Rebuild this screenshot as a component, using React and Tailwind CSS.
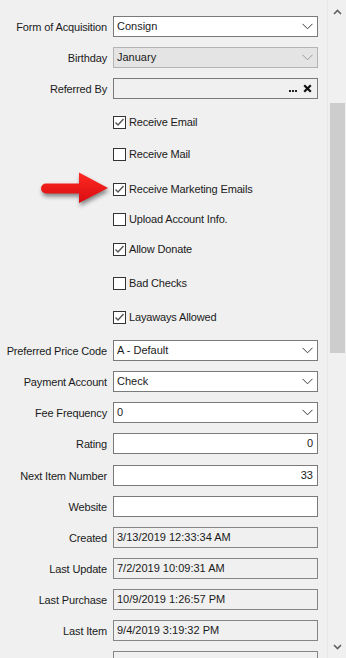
import React from "react";

const font = { fontFamily: '"Liberation Sans", Arial, sans-serif' };

function Chevron({ light }) {
  return (
    <svg width="11" height="7" viewBox="0 0 11 7" className="shrink-0">
      <polyline points="0.5,0.8 5.5,5.8 10.5,0.8" fill="none" stroke={light ? "#9a9a9a" : "#3c3c3c"} strokeWidth="1" />
    </svg>
  );
}

function Row({ label, children, className = "" }) {
  return (
    <div className={"flex items-center h-[21px] " + className}>
      <div className="w-[107px] text-right text-[11px] tracking-[-0.15px] text-[#1a1a1a] whitespace-nowrap pt-px">{label}</div>
      <div className="ml-[6px] w-[205px] h-[21px]">{children}</div>
    </div>
  );
}

function Select({ value, disabled }) {
  return (
    <div
      className={
        "h-full flex items-center justify-between pl-[3px] pr-[4px] border text-[11px] text-[#1a1a1a] " +
        (disabled ? "bg-[#e4e4e4] border-[#b4b4b4]" : "bg-white border-[#7a7a7a]")
      }
    >
      <span>{value}</span>
      <Chevron light={disabled} />
    </div>
  );
}

function Field({ value = "", right, ro }) {
  return (
    <div
      className={
        "h-full flex items-center px-[3px] border text-[11px] text-[#1a1a1a] " +
        (right ? "justify-end pr-[4px] " : "") +
        (ro ? "bg-[#f0f0f0] border-[#858585]" : "bg-white border-[#7a7a7a]")
      }
    >
      {value}
    </div>
  );
}

function Check({ label, checked, className = "" }) {
  return (
    <div className={"flex items-center h-[13px] pl-[113px] " + className}>
      <div className="w-[13px] h-[13px] border border-[#333] bg-white flex items-center justify-center">
        {checked && (
          <svg width="11" height="11" viewBox="0 0 11 11">
            <polyline points="1.5,5.5 4,8 9.5,2" fill="none" stroke="#555" strokeWidth="1.4" />
          </svg>
        )}
      </div>
      <span className="ml-[3px] text-[11px] tracking-[-0.15px] text-[#1a1a1a] whitespace-nowrap">{label}</span>
    </div>
  );
}

export default function App() {
  return (
    <div className="relative w-[346px] h-[658px] bg-[#f0f0f0] flex overflow-hidden" style={font}>
      <div className="w-[327px] flex flex-col">
        <div className="mt-[2px] h-px w-[324px] bg-white" />
        <Row label="Form of Acquisition" className="mt-[14px]">
          <Select value="Consign" />
        </Row>
        <Row label="Birthday" className="mt-[10px]">
          <Select value="January" disabled />
        </Row>
        <Row label="Referred By" className="mt-[10px]">
          <div className="h-full flex items-center justify-end pr-[5px] border border-[#7a7a7a] bg-[#f0f0f0] gap-[6px]">
            <svg width="8" height="9" viewBox="0 0 8 9">
              <rect x="0" y="6" width="2" height="2" fill="#222" />
              <rect x="3" y="6" width="2" height="2" fill="#222" />
              <rect x="6" y="6" width="2" height="2" fill="#222" />
            </svg>
            <svg width="9" height="9" viewBox="0 0 9 9">
              <path d="M1.2 1.2 L7.8 7.8 M7.8 1.2 L1.2 7.8" stroke="#111" strokeWidth="2.2" />
            </svg>
          </div>
        </Row>
        <Check label="Receive Email" checked className="mt-[17px]" />
        <Check label="Receive Mail" className="mt-[19px]" />
        <Check label="Receive Marketing Emails" checked className="mt-[22px]" />
        <Check label="Upload Account Info." className="mt-[17px]" />
        <Check label="Allow Donate" checked className="mt-[17px]" />
        <Check label="Bad Checks" className="mt-[21px]" />
        <Check label="Layaways Allowed" checked className="mt-[21px]" />
        <Row label="Preferred Price Code" className="mt-[16px]">
          <Select value="A - Default" />
        </Row>
        <Row label="Payment Account" className="mt-[10px]">
          <Select value="Check" />
        </Row>
        <Row label="Fee Frequency" className="mt-[10px]">
          <Select value="0" />
        </Row>
        <Row label="Rating" className="mt-[10px]">
          <Field value="0" right />
        </Row>
        <Row label="Next Item Number" className="mt-[11px]">
          <Field value="33" right />
        </Row>
        <Row label="Website" className="mt-[10px]">
          <Field />
        </Row>
        <Row label="Created" className="mt-[10px]">
          <Field value="3/13/2019 12:33:34 AM" ro />
        </Row>
        <Row label="Last Update" className="mt-[10px]">
          <Field value="7/2/2019 10:09:31 AM" ro />
        </Row>
        <Row label="Last Purchase" className="mt-[10px]">
          <Field value="10/9/2019 1:26:57 PM" ro />
        </Row>
        <Row label="Last Item" className="mt-[10px]">
          <Field value="9/4/2019 3:19:32 PM" ro />
        </Row>
        <Row label="" className="mt-[10px]">
          <Field ro />
        </Row>
      </div>

      <div className="w-[19px] border-l border-[#e8e8e8] bg-[#f0f0f0] flex flex-col items-center">
        <svg width="9" height="6" viewBox="0 0 9 6" className="mt-[9px]">
          <polyline points="1,5 4.5,1.5 8,5" fill="none" stroke="#606060" strokeWidth="1.6" />
        </svg>
        <div className="mt-[88px] w-[15px] h-[250px] bg-[#cdcdcd]" />
        <div className="flex-1" />
        <svg width="9" height="6" viewBox="0 0 9 6" className="mb-[8px]">
          <polyline points="1,1 4.5,4.5 8,1" fill="none" stroke="#606060" strokeWidth="1.6" />
        </svg>
      </div>

      <svg
        className="absolute left-[34px] top-[166px]"
        width="80"
        height="44"
        viewBox="34 166 80 44"
        style={{ filter: "drop-shadow(1px 3px 2px rgba(0,0,0,0.45))" }}
      >
        <defs>
          <linearGradient id="rg" x1="0" y1="0" x2="0" y2="1">
            <stop offset="0" stopColor="#ff2a22" />
            <stop offset="1" stopColor="#d80c10" />
          </linearGradient>
        </defs>
        <path
          d="M46 183.5 L79 183.5 L79 172.5 L108 188 L79 203 L79 193.5 L46 193.5 A5 5 0 0 1 46 183.5 Z"
          fill="url(#rg)"
        />
      </svg>
    </div>
  );
}
